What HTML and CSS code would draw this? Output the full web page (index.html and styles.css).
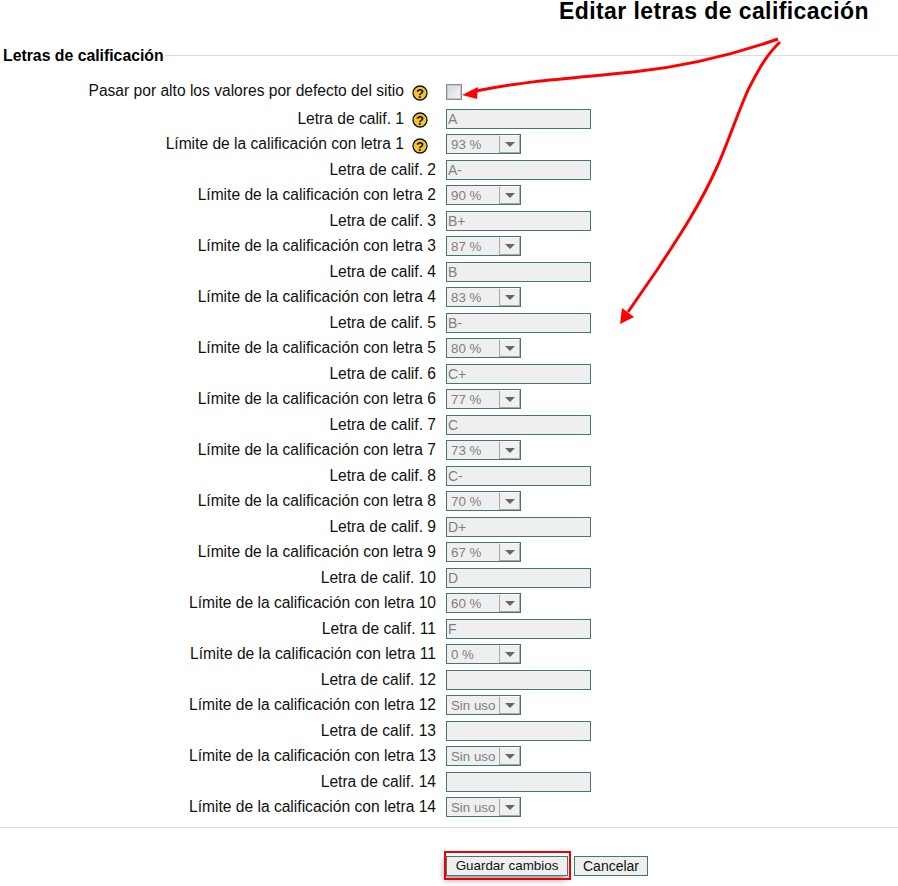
FILE: index.html
```html
<!DOCTYPE html>
<html lang="es">
<head>
<meta charset="utf-8">
<title>Editar letras de calificación</title>
<link rel="stylesheet" href="styles.css">
</head>
<body>
<svg width="0" height="0" class="defs"><defs>
<symbol id="help" viewBox="0 0 16 16"><circle cx="8" cy="8" r="7" fill="#f5c32c" stroke="#111" stroke-width="1.3"/><text x="8" y="12.5" text-anchor="middle" class="q">?</text></symbol>
</defs></svg>
<h1 class="title">Editar letras de calificación</h1>
<form class="form">
<fieldset class="group">
<legend class="legend">Letras de calificación</legend>
<div class="rows">
<div class="row first"><label class="lab">Pasar por alto los valores por defecto del sitio<svg class="help"><use href="#help"/></svg></label><span class="check"></span></div>
<div class="row t"><label class="lab">Letra de calif. 1<svg class="help"><use href="#help"/></svg></label><input class="txt" disabled value="A"></div>
<div class="row s"><label class="lab">Límite de la calificación con letra 1<svg class="help"><use href="#help"/></svg></label><span class="sel"><span class="val">93 %</span><span class="btn"><i></i></span></span></div>
<div class="row t"><label class="lab">Letra de calif. 2</label><input class="txt" disabled value="A-"></div>
<div class="row s"><label class="lab">Límite de la calificación con letra 2</label><span class="sel"><span class="val">90 %</span><span class="btn"><i></i></span></span></div>
<div class="row t"><label class="lab">Letra de calif. 3</label><input class="txt" disabled value="B+"></div>
<div class="row s"><label class="lab">Límite de la calificación con letra 3</label><span class="sel"><span class="val">87 %</span><span class="btn"><i></i></span></span></div>
<div class="row t"><label class="lab">Letra de calif. 4</label><input class="txt" disabled value="B"></div>
<div class="row s"><label class="lab">Límite de la calificación con letra 4</label><span class="sel"><span class="val">83 %</span><span class="btn"><i></i></span></span></div>
<div class="row t"><label class="lab">Letra de calif. 5</label><input class="txt" disabled value="B-"></div>
<div class="row s"><label class="lab">Límite de la calificación con letra 5</label><span class="sel"><span class="val">80 %</span><span class="btn"><i></i></span></span></div>
<div class="row t"><label class="lab">Letra de calif. 6</label><input class="txt" disabled value="C+"></div>
<div class="row s"><label class="lab">Límite de la calificación con letra 6</label><span class="sel"><span class="val">77 %</span><span class="btn"><i></i></span></span></div>
<div class="row t"><label class="lab">Letra de calif. 7</label><input class="txt" disabled value="C"></div>
<div class="row s"><label class="lab">Límite de la calificación con letra 7</label><span class="sel"><span class="val">73 %</span><span class="btn"><i></i></span></span></div>
<div class="row t"><label class="lab">Letra de calif. 8</label><input class="txt" disabled value="C-"></div>
<div class="row s"><label class="lab">Límite de la calificación con letra 8</label><span class="sel"><span class="val">70 %</span><span class="btn"><i></i></span></span></div>
<div class="row t"><label class="lab">Letra de calif. 9</label><input class="txt" disabled value="D+"></div>
<div class="row s"><label class="lab">Límite de la calificación con letra 9</label><span class="sel"><span class="val">67 %</span><span class="btn"><i></i></span></span></div>
<div class="row t"><label class="lab">Letra de calif. 10</label><input class="txt" disabled value="D"></div>
<div class="row s"><label class="lab">Límite de la calificación con letra 10</label><span class="sel"><span class="val">60 %</span><span class="btn"><i></i></span></span></div>
<div class="row t"><label class="lab">Letra de calif. 11</label><input class="txt" disabled value="F"></div>
<div class="row s"><label class="lab">Límite de la calificación con letra 11</label><span class="sel"><span class="val">0 %</span><span class="btn"><i></i></span></span></div>
<div class="row t"><label class="lab">Letra de calif. 12</label><input class="txt" disabled value=""></div>
<div class="row s"><label class="lab">Límite de la calificación con letra 12</label><span class="sel"><span class="val">Sin uso</span><span class="btn"><i></i></span></span></div>
<div class="row t"><label class="lab">Letra de calif. 13</label><input class="txt" disabled value=""></div>
<div class="row s"><label class="lab">Límite de la calificación con letra 13</label><span class="sel"><span class="val">Sin uso</span><span class="btn"><i></i></span></span></div>
<div class="row t"><label class="lab">Letra de calif. 14</label><input class="txt" disabled value=""></div>
<div class="row s"><label class="lab">Límite de la calificación con letra 14</label><span class="sel"><span class="val">Sin uso</span><span class="btn"><i></i></span></span></div>
</div>
</fieldset>
<div class="actions">
<button type="button" class="action primary">Guardar cambios</button>
<button type="button" class="action">Cancelar</button>
</div>
</form>
<svg class="notes" width="898" height="886" viewBox="0 0 898 886">
<path class="line" d="M778 39C735 54 690 66 633 72S530 80 476 91"/>
<path class="head" d="M462 95L478 87L477 99Z"/>
<path class="line" d="M780 42C765 56 757 73 748 90C735 120 725 150 717 167C700 205 680 235 657 270L628 312"/>
<path class="head" d="M620 324L622 308L634 317Z"/>
<rect class="box" x="445" y="852" width="125" height="27"/>
</svg>
</body>
</html>
```
FILE: styles.css
```css
* { box-sizing: border-box; }
html, body { margin: 0; padding: 0; background: #fff; }
body {
  position: relative;
  width: 898px;
  height: 886px;
  overflow: hidden;
  font-family: "Liberation Sans", Arial, sans-serif;
  font-size: 15.6px;
  color: #111;
}
.defs { position: absolute; }
.q { font: bold 13px "Liberation Sans", sans-serif; fill: #111; }
.title {
  margin: 0;
  height: 47px;
  padding: 0 29px 0 0;
  text-align: right;
  font-size: 23px;
  line-height: 23px;
  font-weight: bold;
  color: #000;
  letter-spacing: 0.42px;
}
.form { display: block; }
.group {
  margin: 0;
  padding: 0;
  min-width: 0;
  border: 0;
  border-top: 1px solid #ddd;
}
.legend {
  margin: 0;
  padding: 0 1px 0 3px;
  font-weight: bold;
  font-size: 15.8px;
  line-height: 17px;
  color: #000;
}
.rows { display: flex; flex-direction: column; padding-top: 14px; }
.row { display: flex; align-items: center; }
.row.first { height: 28px; }
.row.t { height: 25px; }
.row.s { height: 26px; }
.lab {
  flex: 0 0 436px;
  display: flex;
  justify-content: flex-end;
  align-items: center;
  margin-right: 10px;
  line-height: 17px;
}
.first .lab { padding-bottom: 3px; }
.s .lab { padding-bottom: 2px; }
.help { width: 16px; height: 16px; margin: 3px 8px 0 8px; }
.first .help, .s .help { margin-top: 5px; }
.check {
  width: 16px;
  height: 16px;
  border: 1px solid #8f8f8f;
  box-shadow: inset 0 0 0 1px #c6c6ca;
  background: linear-gradient(135deg, #d4d6dc, #f7f7f9);
}
.txt {
  width: 145px;
  height: 20px;
  padding: 0 1px;
  border: 1px solid #467577;
  border-radius: 0;
  background: #efefef;
  font: 14px "Liberation Sans", Arial, sans-serif;
  color: #808080;
  -webkit-text-fill-color: #808080;
  opacity: 1;
}
.sel {
  display: flex;
  align-items: stretch;
  width: 75px;
  height: 20px;
  border: 1px solid #467577;
  background: #efefef;
  color: #808080;
}
.val { flex: 1; padding-left: 4px; line-height: 20px; font-size: 13.3px; white-space: nowrap; overflow: hidden; }
.btn {
  flex: 0 0 21px;
  display: flex;
  align-items: center;
  justify-content: center;
  border: 1px solid #a8a8a8;
  border-top-color: #fff;
  border-right-color: #b5b5b5;
  background: #f0f0f0;
}
.btn i {
  width: 0;
  height: 0;
  border-left: 5px solid transparent;
  border-right: 5px solid transparent;
  border-top: 5px solid #666;
}
.actions {
  display: flex;
  gap: 6px;
  margin-top: 7px;
  padding: 28px 0 0 446px;
  border-top: 1px solid #ddd;
}
.action {
  height: 20px;
  padding: 0 8px;
  border: 1px solid #467577;
  border-radius: 0;
  background: #efefef;
  font: 14px/18px "Liberation Sans", Arial, sans-serif;
  color: #111;
  white-space: nowrap;
}
.primary { width: 122px; padding: 0; font-size: 13.4px; box-shadow: -2px 4px 6px rgba(90, 90, 90, .6); }
.notes { position: absolute; left: 0; top: 0; pointer-events: none; }
.line { fill: none; stroke: #f00; stroke-width: 3; }
.head { fill: #f00; }
.box { fill: none; stroke: #ee0000; stroke-width: 2; }
```
